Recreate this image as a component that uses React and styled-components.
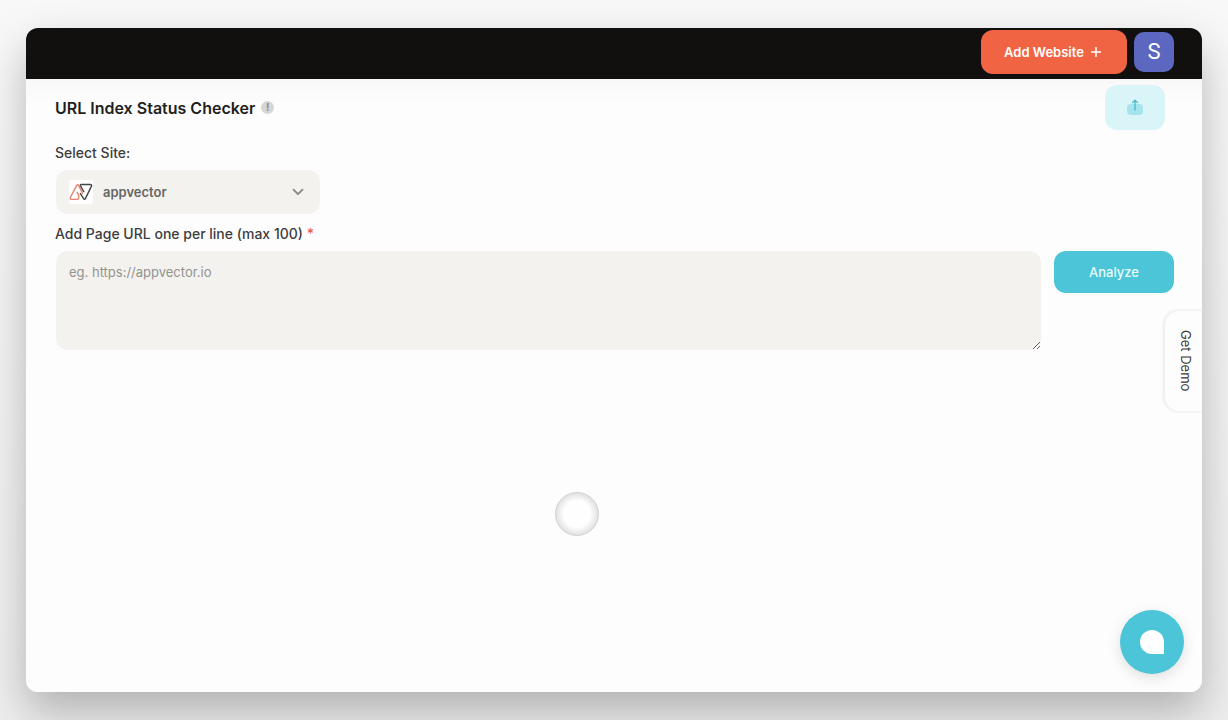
import React, { useState } from 'react';
import styled, { createGlobalStyle } from 'styled-components';

const App = () => {
  const [site, setSite] = useState('appvector');
  const [urls, setUrls] = useState('');

  return (
    <>
      <GlobalStyle />
      <Page>
        <Window>
          <Header>
            <AddWebsiteButton type='button'>
              Add Website
              <PlusIcon />
            </AddWebsiteButton>
            <Avatar type='button' aria-label='Account'>
              S
            </Avatar>
          </Header>
          <Main>
            <TitleRow>
              <Title>URL Index Status Checker</Title>
              <InfoBadge type='button' aria-label='More information'>
                !
              </InfoBadge>
              <ShareButton type='button' aria-label='Share'>
                <ShareIcon />
              </ShareButton>
            </TitleRow>
            <FieldLabel htmlFor='site'>Select Site:</FieldLabel>
            <SelectBox>
              <SiteLogo />
              <SiteSelect
                id='site'
                value={site}
                onChange={(e) => setSite(e.target.value)}
              >
                <option value='appvector'>appvector</option>
              </SiteSelect>
              <ChevronIcon />
            </SelectBox>
            <FieldLabel htmlFor='urls'>
              Add Page URL one per line (max 100) <Required>*</Required>
            </FieldLabel>
            <UrlRow>
              <UrlTextarea
                id='urls'
                placeholder='eg. https://appvector.io'
                value={urls}
                onChange={(e) => setUrls(e.target.value)}
              />
              <AnalyzeButton type='button'>Analyze</AnalyzeButton>
            </UrlRow>
          </Main>
          <TouchPointer />
          <DemoTab type='button'>Get Demo</DemoTab>
          <ChatButton type='button' aria-label='Open chat'>
            <ChatBubble />
          </ChatButton>
        </Window>
      </Page>
    </>
  );
};

export default App;

// 아이콘
const PlusIcon = () => (
  <svg width='12' height='12' viewBox='0 0 12 12' aria-hidden='true'>
    <path d='M6 1v10M1 6h10' stroke='#fff' strokeWidth='1.5' />
  </svg>
);

const ShareIcon = () => (
  <svg width='18' height='18' viewBox='0 0 18 18' fill='none' aria-hidden='true'>
    <rect x='1' y='5' width='16' height='11' rx='4' fill='#a5e4ec' />
    <path
      d='M9 11V1.5M6.5 3.6 9 1.1l2.5 2.5'
      stroke='#45b9ca'
      strokeWidth='1.3'
      strokeLinecap='round'
      strokeLinejoin='round'
    />
  </svg>
);

const ChevronIcon = () => (
  <svg width='12' height='8' viewBox='0 0 12 8' fill='none' aria-hidden='true'>
    <path
      d='M1.5 1.7 6 6.2l4.5-4.5'
      stroke='#858583'
      strokeWidth='1.8'
      strokeLinecap='round'
      strokeLinejoin='round'
    />
  </svg>
);

const SiteLogo = () => (
  <svg width='24' height='24' viewBox='0 0 24 24' fill='none' aria-hidden='true'>
    <rect width='24' height='24' rx='2' fill='#fff' />
    <path
      d='M13.6 13.5 9.6 5.4c-.4-.8-1.5-.8-1.9 0L1.3 17.6c-.4.9.1 1.8 1 1.8h6c.9 0 1.4-.6 1.4-1.4v-2.6l-1.5-3'
      stroke='#e58672'
      strokeWidth='1.4'
      strokeLinecap='round'
      strokeLinejoin='round'
    />
    <path
      d='M14.8 11.6 11.5 6c-.5-.8 0-1.5.9-1.5h9.1c.9 0 1.4.8 1 1.6l-6.1 12.5c-.4.8-1.4.8-1.8 0l-3.2-5'
      stroke='#444'
      strokeWidth='1.4'
      strokeLinecap='round'
      strokeLinejoin='round'
    />
  </svg>
);

const ChatBubble = () => (
  <svg width='24' height='24' viewBox='0 0 24 24' aria-hidden='true'>
    <path d='M12 0a12 12 0 0 1 12 12v12H12a12 12 0 0 1 0-24z' fill='#fff' />
  </svg>
);

// 스타일 컴포넌트 정의
const GlobalStyle = createGlobalStyle`
  * {
    box-sizing: border-box;
  }

  body {
    margin: 0;
    background: #f3f3f3;
    font-family: Inter, 'Liberation Sans', sans-serif;
  }

  button,
  select,
  textarea {
    margin: 0;
    border: none;
    font-family: inherit;
  }

  button {
    padding: 0;
    cursor: pointer;
  }
`;

const Page = styled.div`
  display: flex;
  min-height: 100vh;
  padding: 28px 26px;
  overflow: hidden;
  background: linear-gradient(#f8f8f8, #eeeeee);
`;

const Window = styled.div`
  position: relative;
  display: flex;
  flex-direction: column;
  flex: 1;
  min-width: 0;
  border-radius: 12px;
  background: #fdfdfd;
  box-shadow: 0 20px 44px rgba(0, 0, 0, 0.26);
`;

const Header = styled.header`
  display: flex;
  align-items: center;
  justify-content: flex-end;
  gap: 7px;
  height: 51px;
  padding: 0 28px 4px;
  border-radius: 12px 12px 0 0;
  background: #11100e;
`;

const AddWebsiteButton = styled.button`
  display: flex;
  align-items: center;
  justify-content: center;
  gap: 6px;
  width: 146px;
  height: 44px;
  padding-right: 2px;
  border-radius: 12px;
  background: #f06444;
  color: #fff;
  font-size: 13px;
  font-weight: 600;
`;

const Avatar = styled.button`
  width: 40px;
  height: 40px;
  border-radius: 10px;
  background: #5c68c0;
  color: #fff;
  font-family: Roboto, sans-serif;
  font-size: 22px;
`;

const Main = styled.main`
  display: flex;
  flex-direction: column;
  flex: 1;
  padding: 6px 28px 28px 29px;
  border-radius: 0 0 12px 12px;
  background: linear-gradient(#f8f8f8, #fdfdfd 24px);
`;

const TitleRow = styled.div`
  display: flex;
  align-items: center;
  gap: 6px;
  margin-bottom: 13px;
  padding-right: 9px;
`;

const Title = styled.h1`
  margin: 0;
  color: #1f1f1f;
  font-size: 16px;
  font-weight: 600;
  line-height: 24px;
`;

const InfoBadge = styled.button`
  width: 13px;
  height: 13px;
  border-radius: 50%;
  background: #d6d6d6;
  color: #8a8a8a;
  font-size: 10px;
  font-weight: 700;
  line-height: 13px;
`;

const ShareButton = styled.button`
  display: flex;
  align-items: center;
  justify-content: center;
  width: 60px;
  height: 45px;
  margin-left: auto;
  border-radius: 12px;
  background: #daf5f8;
`;

const FieldLabel = styled.label`
  color: #3d3d3d;
  font-size: 14px;
  font-weight: 500;
  line-height: 20px;
`;

const Required = styled.span`
  color: #e5604c;
`;

const SelectBox = styled.div`
  display: flex;
  align-items: center;
  width: 264px;
  height: 44px;
  margin: 7px 0 10px 1px;
  padding: 0 16px 0 13px;
  border-radius: 12px;
  background: #f4f2ef;
`;

const SiteSelect = styled.select`
  flex: 1;
  height: 44px;
  padding: 0 10px;
  appearance: none;
  background: transparent;
  color: #666664;
  font-size: 13px;
  font-weight: 600;
  outline: none;
`;

const UrlRow = styled.div`
  display: flex;
  align-items: flex-start;
  gap: 13px;
  margin: 7px 0 0 1px;
`;

const UrlTextarea = styled.textarea`
  flex: 1;
  min-width: 0;
  height: 99px;
  padding: 11px 13px;
  border-radius: 12px;
  background: #f4f2ef;
  color: #3d3d3d;
  font-size: 13px;
  line-height: 20px;
  outline: none;
  resize: vertical;

  &::placeholder {
    color: #92928f;
  }
`;

const AnalyzeButton = styled.button`
  width: 120px;
  height: 42px;
  border-radius: 12px;
  background: #4bc5d7;
  color: #e9fafc;
  font-size: 13px;
  font-weight: 500;
`;

const TouchPointer = styled.div`
  position: absolute;
  top: 464px;
  left: 529px;
  width: 44px;
  height: 44px;
  border: 1px solid #d2d2d2;
  border-radius: 50%;
  background: radial-gradient(circle, #fefefe 45%, #e0e0e0 72%);
`;

const DemoTab = styled.button`
  position: absolute;
  top: 283px;
  right: 0;
  display: flex;
  align-items: center;
  justify-content: center;
  width: 37px;
  height: 100px;
  padding-left: 4px;
  border-radius: 14px 0 0 14px;
  background: #fdfdfd;
  box-shadow: -1px 0 3px 1px rgba(0, 0, 0, 0.07);
  clip-path: inset(-6px 0 -6px -6px);
  color: #3a3a3a;
  font-size: 13px;
  writing-mode: vertical-rl;
`;

const ChatButton = styled.button`
  position: absolute;
  right: 18px;
  bottom: 18px;
  display: flex;
  align-items: center;
  justify-content: center;
  width: 64px;
  height: 64px;
  border-radius: 50%;
  background: #4bc5d7;
  box-shadow: 0 4px 14px rgba(0, 0, 0, 0.12);
`;
